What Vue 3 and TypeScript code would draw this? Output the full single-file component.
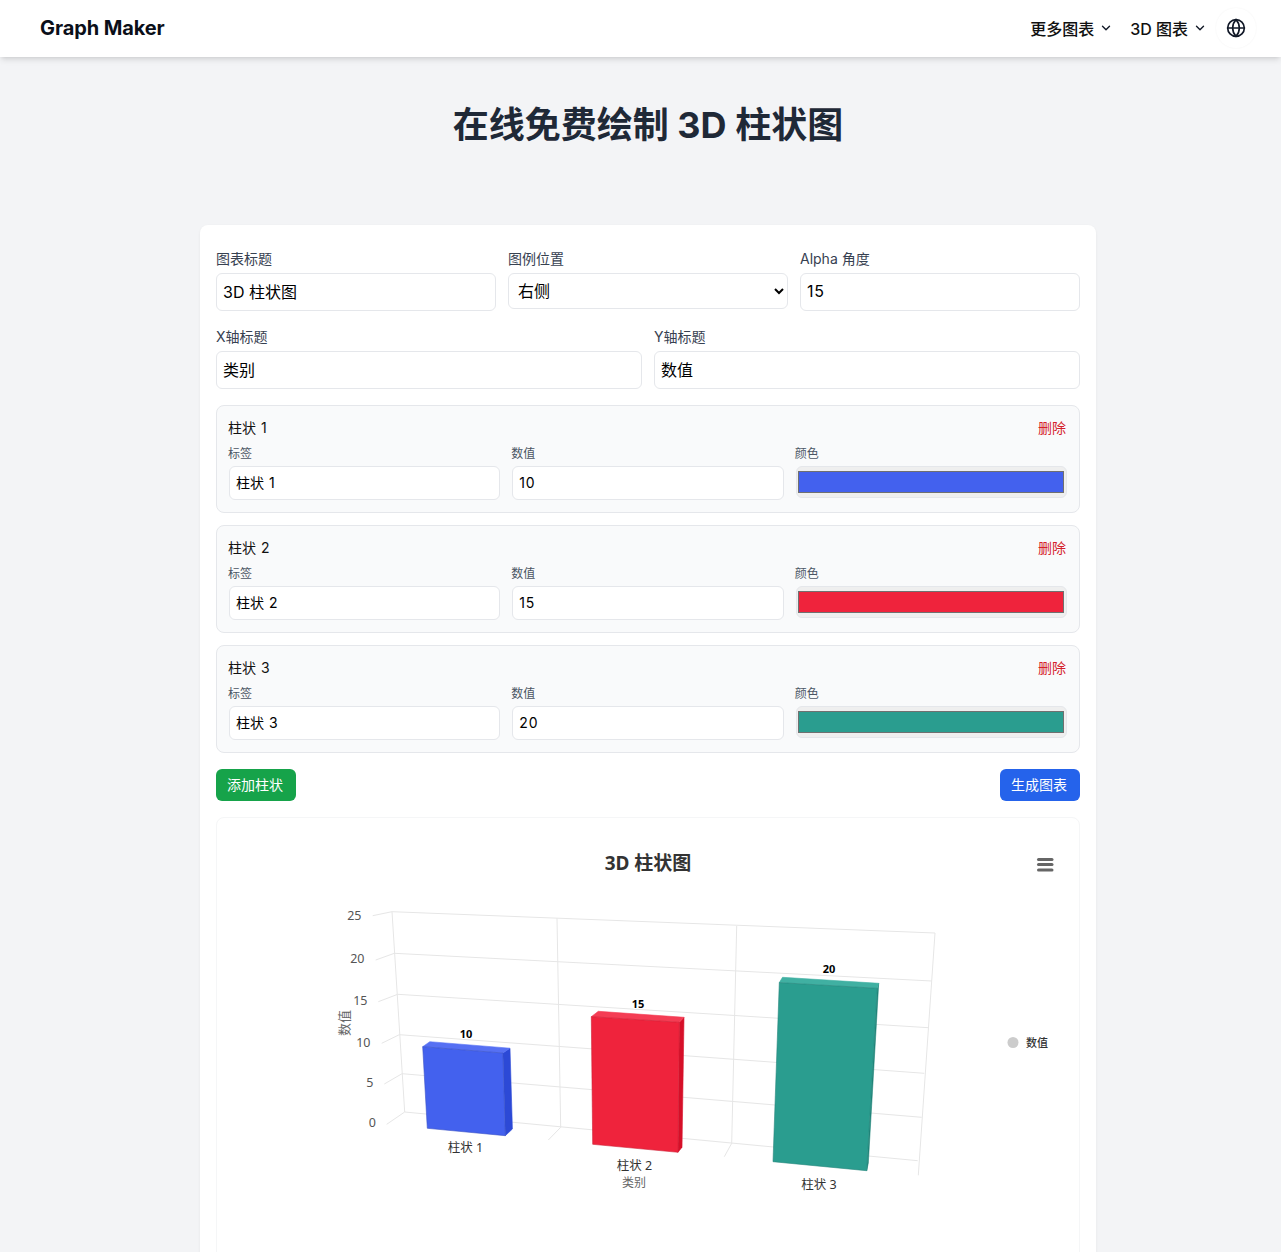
<script setup lang="ts">
interface BarItem { name: string; value: number; color: string }
interface Face { points: string; fill: string; stroke: string }

const bars: BarItem[] = [
  { name: '柱状 1', value: 10, color: '#4361ee' },
  { name: '柱状 2', value: 15, color: '#ef233c' },
  { name: '柱状 3', value: 20, color: '#2a9d8f' },
]

const wallLines: string[] = [
  '392,911.7 935,933', '394.3,953.3 931.7,981', '397.7,994.3 928.3,1027.7',
  '399.3,1034.7 924.3,1073.3', '402,1073.7 921.7,1117.3', '404.7,1112 917.7,1160.7',
  '392,911.7 404.7,1112', '935,933 918.3,1175.3',
  '557,918.3 560.7,1127.3 548.3,1140', '736.7,926 731.7,1143.3 724.3,1156.7',
  '372.7,915.7 392,911.7', '375.7,960 394.3,953.3', '378.3,1001.7 397.7,994.3',
  '381.7,1043.3 399.3,1034.7', '384.3,1084 402,1073.7', '386.7,1124.3 404.7,1112',
]

const faces: Face[] = [
  { points: '502.9,1053 510,1048.2 512.4,1129 505.3,1135.7', fill: '#2c49d6', stroke: '#2c49d6' },
  { points: '422.7,1046.7 429.8,1041.7 510,1048.2 502.9,1053', fill: '#5670f3', stroke: '#5670f3' },
  { points: '422.7,1046.7 502.9,1053 505.3,1135.7 427.3,1128.3', fill: '#4361ee', stroke: '#3a52c4' },
  { points: '679.3,1022.3 684,1017.3 682,1147.3 678,1152.3', fill: '#d60f28', stroke: '#d60f28' },
  { points: '591.3,1016.7 598.3,1011.3 684,1017.3 679.3,1022.3', fill: '#f43d54', stroke: '#f43d54' },
  { points: '591.3,1016.7 679.3,1022.3 678,1152.3 592.7,1144.3', fill: '#ef233c', stroke: '#cf2036' },
  { points: '877.3,988.3 878.7,983.3 868.3,1163 866.7,1170.7', fill: '#1f8579', stroke: '#1f8579' },
  { points: '779.3,982.6 782.5,977.3 878.7,983.3 877.3,988.3', fill: '#40b0a2', stroke: '#40b0a2' },
  { points: '779.3,982.6 877.3,988.3 866.7,1170.7 773,1161.7', fill: '#2a9d8f', stroke: '#26877c' },
]

const yTicks = [
  { t: '25', x: 361.5, y: 915 }, { t: '20', x: 364.5, y: 958 }, { t: '15', x: 367.5, y: 1000 },
  { t: '10', x: 370.5, y: 1042 }, { t: '5', x: 373.5, y: 1082 }, { t: '0', x: 376, y: 1122 },
]
const xTicks = [
  { t: '柱状 1', x: 465.5, y: 1147 }, { t: '柱状 2', x: 634.5, y: 1165 }, { t: '柱状 3', x: 819, y: 1184 },
]
const dataLabels = [
  { t: '10', x: 466, y: 1033 }, { t: '15', x: 638, y: 1003 }, { t: '20', x: 829, y: 968 },
]
</script>

<template>
  <div class="page">
    <header class="topbar">
      <span class="logo">Graph Maker</span>
      <nav class="nav">
        <span class="nav-item">更多图表
          <svg class="chev" viewBox="0 0 24 24"><path d="m6 9 6 6 6-6" /></svg>
        </span>
        <span class="nav-item">3D 图表
          <svg class="chev" viewBox="0 0 24 24"><path d="m6 9 6 6 6-6" /></svg>
        </span>
        <span class="globe-btn">
          <svg class="globe" viewBox="0 0 24 24">
            <circle cx="12" cy="12" r="10" />
            <path d="M12 2a14.5 14.5 0 0 0 0 20 14.5 14.5 0 0 0 0-20" />
            <path d="M2 12h20" />
          </svg>
        </span>
      </nav>
    </header>

    <main class="main">
      <h1 class="title">在线免费绘制 3D 柱状图</h1>

      <section class="card">
        <div class="grid three">
          <label class="field">
            <span class="field-label">图表标题</span>
            <input class="input" type="text" value="3D 柱状图" />
          </label>
          <label class="field">
            <span class="field-label">图例位置</span>
            <select class="input select"><option>右侧</option></select>
          </label>
          <label class="field">
            <span class="field-label">Alpha 角度</span>
            <input class="input num" type="number" value="15" />
          </label>
        </div>
        <div class="grid two">
          <label class="field">
            <span class="field-label">X轴标题</span>
            <input class="input" type="text" value="类别" />
          </label>
          <label class="field">
            <span class="field-label">Y轴标题</span>
            <input class="input" type="text" value="数值" />
          </label>
        </div>

        <div class="bar-list">
          <div v-for="bar in bars" :key="bar.name" class="bar-panel">
            <div class="bar-head">
              <span>{{ bar.name }}</span>
              <span class="del">删除</span>
            </div>
            <div class="bar-grid">
              <label class="field">
                <span class="sub-label">标签</span>
                <input class="input small" type="text" :value="bar.name" />
              </label>
              <label class="field">
                <span class="sub-label">数值</span>
                <input class="input small num" type="number" :value="bar.value" />
              </label>
              <label class="field">
                <span class="sub-label">颜色</span>
                <input class="color" type="color" :value="bar.color" />
              </label>
            </div>
          </div>
        </div>

        <div class="actions">
          <button class="btn green" type="button">添加柱状</button>
          <button class="btn blue" type="button">生成图表</button>
        </div>

        <div class="chart-box">
          <svg class="chart" viewBox="217 818 862 500" width="862" height="500">
            <polyline v-for="(l, i) in wallLines" :key="i" :points="l" class="wall" />
            <polygon v-for="(f, i) in faces" :key="'f' + i" :points="f.points" :fill="f.fill" :stroke="f.stroke" stroke-width="0.6" />

            <text x="648" y="862.5" class="chart-title">3D 柱状图</text>

            <g class="menu">
              <rect x="1037" y="858" width="16.5" height="3" rx="1.5" />
              <rect x="1037" y="863" width="16.5" height="3" rx="1.5" />
              <rect x="1037" y="868.5" width="16.5" height="3" rx="1.5" />
            </g>

            <text v-for="t in yTicks" :key="t.t" :x="t.x" :y="t.y" class="tick">{{ t.t }}</text>
            <text class="axis-title" transform="translate(344 1023) rotate(-90)">数值</text>
            <text v-for="t in xTicks" :key="t.t" :x="t.x" :y="t.y" class="xtick">{{ t.t }}</text>
            <text x="634" y="1182" class="axis-x">类别</text>
            <text v-for="t in dataLabels" :key="t.t" :x="t.x" :y="t.y" class="data-label">{{ t.t }}</text>

            <circle cx="1013" cy="1042.5" r="5.5" fill="#cccccc" />
            <text x="1026" y="1042" class="legend">数值</text>
          </svg>
        </div>
      </section>
    </main>
  </div>
</template>

<style>
html, body { margin: 0; background: #f3f4f6; overflow: hidden; }
</style>

<style scoped>
.page {
  height: 1252px;
  overflow: hidden;
  background: #f3f4f6;
  font-family: Inter, "Noto Sans CJK SC", sans-serif;
  color: #111827;
}
.topbar {
  height: 57px;
  box-sizing: border-box;
  background: #fff;
  box-shadow: 0 4px 6px -1px rgba(0, 0, 0, .1), 0 2px 4px -2px rgba(0, 0, 0, .1);
  display: flex;
  align-items: center;
  justify-content: space-between;
  padding: 0 25px 1px 40px;
  position: relative;
}
.logo { font-size: 20px; font-weight: 700; letter-spacing: -.1px; color: #0b0f19; padding-bottom: 1px; }
.nav { display: flex; align-items: center; }
.nav-item {
  display: flex;
  align-items: center;
  gap: 4px;
  font-size: 16px;
  font-weight: 500;
  color: #111;
  margin-right: 17px;
  padding-bottom: 1px;
  white-space: nowrap;
}
.nav-item:nth-child(2) { margin-right: 9px; }
.chev { width: 14px; height: 14px; fill: none; stroke: #111827; stroke-width: 2.4; stroke-linecap: round; stroke-linejoin: round; margin-left: 1px; margin-top: 1px; }
.globe-btn {
  width: 40px; height: 40px; border-radius: 50%;
  display: flex; align-items: center; justify-content: center;
  box-shadow: 0 0 2px rgba(0, 0, 0, .06);
}
.globe { width: 20px; height: 20px; fill: none; stroke: #111827; stroke-width: 2; stroke-linecap: round; stroke-linejoin: round; }

.main { padding: 48px 0 0 15px; }
.title {
  margin: 0 0 80px;
  text-align: center;
  font-size: 36px;
  line-height: 40px;
  font-weight: 700;
  color: #1f2937;
}
.card {
  width: 896px;
  box-sizing: border-box;
  margin: 0 auto;
  padding: 24px 16px 16px;
  background: #fff;
  border-radius: 8px;
  box-shadow: 0 1px 3px rgba(0, 0, 0, .06);
}
.grid { display: grid; gap: 12px; margin-bottom: 16px; align-items: start; }
.three { grid-template-columns: repeat(3, 1fr); }
.two { grid-template-columns: repeat(2, 1fr); }
.field { display: flex; flex-direction: column; min-width: 0; }
.field-label { font-size: 14px; line-height: 20px; color: #374151; margin-bottom: 4px; }
.input {
  width: 100%;
  height: 38px;
  box-sizing: border-box;
  padding: 0 6px 2px;
  border: 1px solid #e5e7eb;
  border-radius: 6px;
  background: #fff;
  font: 16px Inter, "Noto Sans CJK SC", sans-serif;
  color: #000;
  outline: none;
}
.num { letter-spacing: .8px; }
.select { height: 36px; padding: 0 5px; }
.input.small { height: 34px; font-size: 14px; word-spacing: 1px; }

.bar-list { display: flex; flex-direction: column; gap: 12px; margin-bottom: 16px; }
.bar-panel {
  padding: 12px;
  border: 1px solid #e5e7eb;
  border-radius: 8px;
  background: #f9fafb;
}
.bar-head {
  display: flex;
  justify-content: space-between;
  font-size: 14px;
  line-height: 20px;
  word-spacing: 1px;
  color: #111;
  margin: 0 1px 8px -1px;
}
.del { color: #d4202a; }
.bar-grid { display: grid; grid-template-columns: repeat(3, 1fr); gap: 12px; align-items: start; }
.sub-label { font-size: 12px; line-height: 16px; color: #4b5563; margin: 0 0 4px -1px; }
.color {
  width: 100%;
  height: 32px;
  box-sizing: border-box;
  padding: 4px 2px 4px 1px;
  border: 1px solid #e5e7eb;
  border-radius: 6px;
  background: #efefef;
  display: block;
}
.color::-webkit-color-swatch-wrapper { padding: 0; }
.color::-webkit-color-swatch { border: 1px solid #707070; border-radius: 0; }

.actions { display: flex; justify-content: space-between; margin-bottom: 16px; }
.btn {
  width: 80px;
  height: 32px;
  border: 0;
  border-radius: 6px;
  color: #fff;
  font: 14px Inter, "Noto Sans CJK SC", sans-serif;
  padding: 0 2px 2px 0;
}
.green { background: #16a34a; }
.blue { background: #2563eb; }

.chart-box {
  border: 1px solid #f5f6f7;
  border-radius: 8px;
  height: 500px;
  overflow: hidden;
}
.chart { display: block; font-family: "Noto Sans", "Noto Sans CJK SC", sans-serif; }
.wall { fill: none; stroke: #e6e6e6; stroke-width: 1; }
.chart-title { font-size: 19px; font-weight: 700; fill: #333; text-anchor: middle; dominant-baseline: central; }
.menu rect { fill: #666; }
.tick { font-size: 12.5px; fill: #555; text-anchor: end; dominant-baseline: central; }
.axis-title { font-size: 13px; fill: #666; text-anchor: middle; dominant-baseline: central; }
.xtick { font-size: 12.5px; fill: #333; text-anchor: middle; dominant-baseline: central; }
.axis-x { font-size: 12px; fill: #666; text-anchor: middle; dominant-baseline: central; }
.data-label {
  font-size: 11px; font-weight: 700; fill: #000; text-anchor: middle; dominant-baseline: central;
  stroke: #fff; stroke-width: 2px; paint-order: stroke;
}
.legend { font-size: 11px; font-weight: 500; fill: #333; dominant-baseline: central; }
</style>
